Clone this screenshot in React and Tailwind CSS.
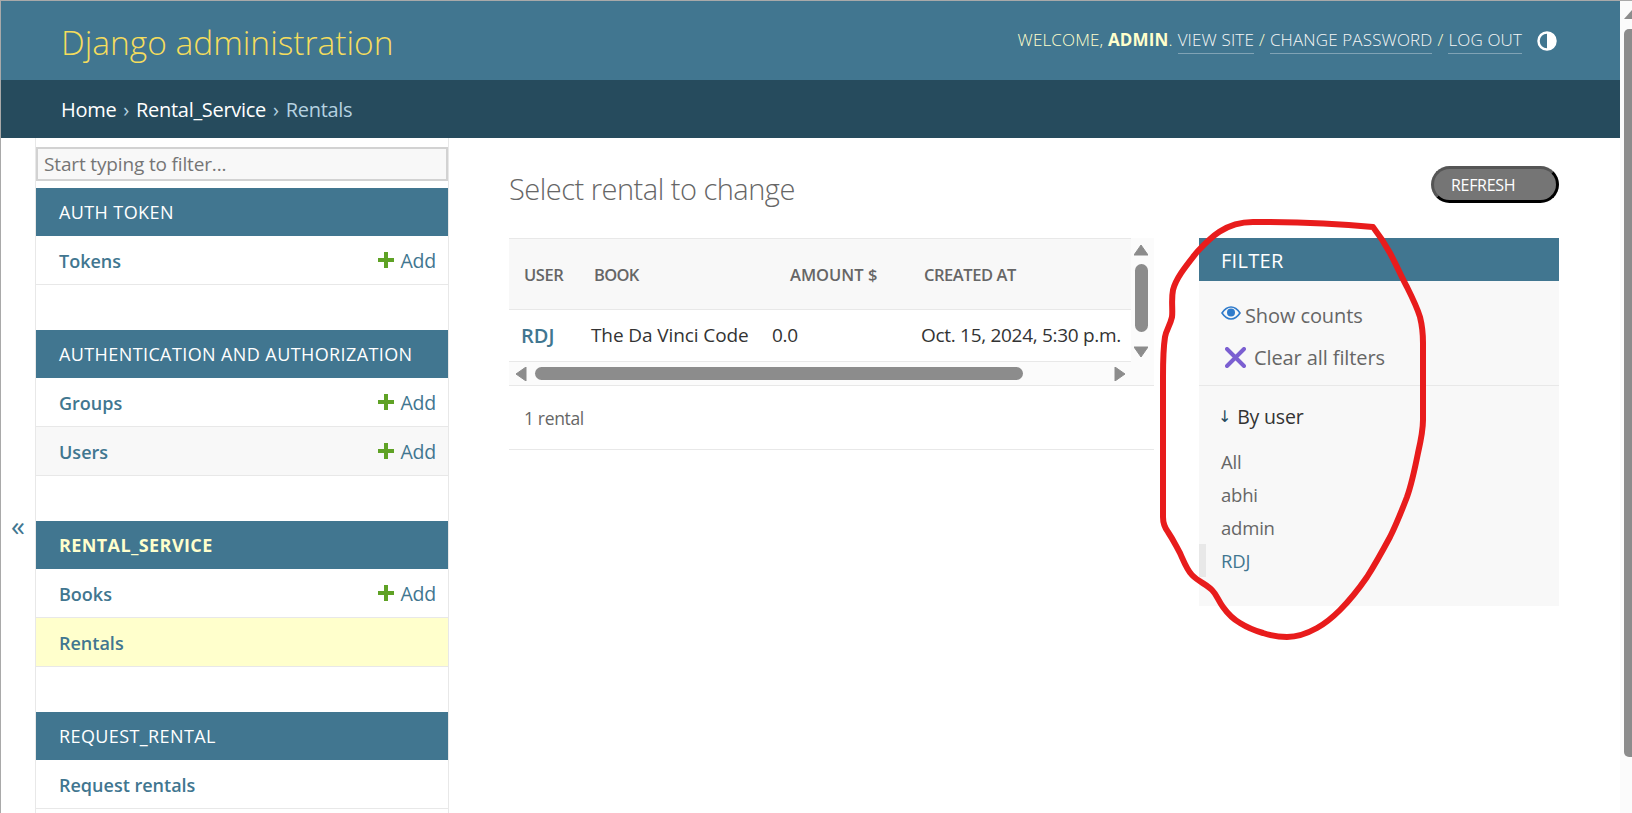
const FONT = "font-['Open_Sans','Noto_Sans',sans-serif]";

function Plus() {
  return (
    <svg width="16" height="16" viewBox="0 0 16 16" className="mr-[6px] -mt-[3px]">
      <path d="M6 0h4v6h6v4h-6v6H6v-6H0V6h6z" fill="#5fa225" />
    </svg>
  );
}

function Row({ name, add, active, alt }) {
  return (
    <div
      className={`h-[49px] flex items-center justify-between pl-[23px] pr-[12px] pt-[2px] border-b border-[#e8e8e8] ${
        active ? "bg-[#ffffcc]" : alt ? "bg-[#f8f8f8]" : "bg-white"
      }`}
    >
      <span className="text-[#417690] text-[18px] font-semibold tracking-[0px]">{name}</span>
      {add && (
        <span className="flex items-center text-[#417690] text-[19.5px] tracking-[-0.2px]">
          <Plus />
          Add
        </span>
      )}
    </div>
  );
}

function Group({ title, current, rows }) {
  return (
    <div className="mb-[45px]">
      <div
        className={`h-[48px] bg-[#417690] flex items-center pl-[23px] pt-[1px] text-[18px] tracking-[0.4px] ${
          current ? "text-[#ffffcc] font-bold" : "text-white"
        }`}
      >
        {title}
      </div>
      {rows.map((r) => (
        <Row key={r.name} {...r} />
      ))}
    </div>
  );
}

function TopLink({ children }) {
  return <span className="border-b border-[#ffffff55] text-[#f6f6f6]">{children}</span>;
}

function Arrow({ dir, size = 14 }) {
  const pts = {
    up: "7,2 14,12 0,12",
    down: "0,2 14,2 7,12",
    left: "12,0 12,14 2,7",
    right: "2,0 12,7 2,14",
  }[dir];
  return (
    <svg width={size} height={size} viewBox="0 0 14 14" className="shrink-0">
      <polygon points={pts} fill="#8c8c8c" stroke="#8c8c8c" strokeWidth="1" strokeLinejoin="round" />
    </svg>
  );
}

function FilterChoice({ children, selected }) {
  return (
    <div
      className={`h-[33px] flex items-center text-[18.5px] tracking-[-0.2px] ${
        selected ? "text-[#417690] border-l-[7px] border-[#e8e8e8] pl-[15px]" : "text-[#666666] pl-[22px]"
      }`}
    >
      {children}
    </div>
  );
}

export default function App() {
  return (
    <div className={`relative h-[813px] w-full overflow-hidden flex bg-white border-l border-t border-[#a9a9a9] ${FONT}`}>
      <div className="w-[1619px] shrink-0 flex flex-col">
        <header className="h-[79px] bg-[#417690] flex items-center justify-between pl-[60px] pr-[63px] shrink-0">
          <h1 className="text-[#f5dd5d] text-[33.5px] font-light mt-[4px]">Django administration</h1>
          <div className="flex items-center">
            <div className="text-[#ffffcc] text-[17px] font-light uppercase tracking-[0.15px] flex gap-[5px]">
              <span>
                Welcome, <strong className="font-bold">admin</strong>.
              </span>
              <TopLink>View site</TopLink>
              <span>/</span>
              <TopLink>Change password</TopLink>
              <span>/</span>
              <TopLink>Log out</TopLink>
            </div>
            <svg width="20" height="20" viewBox="0 0 20 20" className="ml-[15px]">
              <circle cx="10" cy="10" r="8.5" fill="none" stroke="#fff" strokeWidth="2.5" />
              <path d="M10 1a9 9 0 0 1 0 18z" fill="#fff" />
            </svg>
          </div>
        </header>
        <div className="h-[58px] bg-[#264b5d] flex items-center pl-[60px] pt-[2px] text-[20px] tracking-[-0.3px] shrink-0 gap-[7px]">
          <span className="text-white">Home</span>
          <span className="text-[#b5d2e0]">›</span>
          <span className="text-white">Rental_Service</span>
          <span className="text-[#b5d2e0]">›</span>
          <span className="text-[#b5d2e0]">Rentals</span>
        </div>
        <div className="flex flex-1 min-h-0">
          <div className="w-[34px] shrink-0 pt-[372px] flex justify-center">
            <span className="text-[#417690] text-[28px] leading-[30px]">«</span>
          </div>
          <nav className="w-[414px] shrink-0 border-x border-[#e8e8e8] overflow-hidden pt-[9px]">
            <div className="h-[34px] mb-[7px] border-2 border-[#d2d2d2] bg-[#f8f8f8] text-[#757575] text-[19px] tracking-[-0.15px] pl-[6px] pt-[1px] flex items-center">
              Start typing to filter...
            </div>
            <Group title="AUTH TOKEN" rows={[{ name: "Tokens", add: true }]} />
            <Group
              title="AUTHENTICATION AND AUTHORIZATION"
              rows={[
                { name: "Groups", add: true },
                { name: "Users", add: true, alt: true },
              ]}
            />
            <Group
              title="RENTAL_SERVICE"
              current
              rows={[
                { name: "Books", add: true },
                { name: "Rentals", active: true },
              ]}
            />
            <Group title="REQUEST_RENTAL" rows={[{ name: "Request rentals" }]} />
          </nav>
          <main className="flex-1 min-w-0 pl-[60px] pr-[61px]">
            <div className="h-[100px] flex justify-between items-start">
              <h2 className="text-[#666666] text-[29px] font-light tracking-[-0.5px] mt-[31px] leading-[40px]">
                Select rental to change
              </h2>
              <div className="mt-[28px] w-[128px] h-[37px] rounded-full bg-[#757575] border-[3px] border-t-[#555555] border-l-[#555555] border-r-black border-b-black text-white text-[16px] tracking-[-0.3px] flex items-center pl-[17px]">
                REFRESH
              </div>
            </div>
            <div className="flex justify-between">
              <section className="w-[645px]">
                <div className="flex">
                  <div className="w-[622px]">
                    <div className="h-[72px] bg-[#f8f8f8] border-y border-[#e8e8e8] flex items-center pt-[3px] text-[#666666] text-[16.5px] font-semibold tracking-[-0.45px]">
                      <span className="w-[85px] pl-[15px]">USER</span>
                      <span className="w-[196px] tracking-[-0.7px]">BOOK</span>
                      <span className="w-[134px] whitespace-nowrap tracking-[0px]">AMOUNT $</span>
                      <span>CREATED AT</span>
                    </div>
                    <div className="h-[52px] border-b border-[#e8e8e8] flex items-center text-[#333333] text-[19px] tracking-[-0.3px]">
                      <span className="w-[82px] pl-[12px] text-[#417690] text-[20px] font-semibold tracking-[0px]">RDJ</span>
                      <span className="w-[181px] whitespace-nowrap tracking-[-0.1px]">The Da Vinci Code</span>
                      <span className="w-[149px]">0.0</span>
                      <span className="whitespace-nowrap">Oct. 15, 2024, 5:30 p.m.</span>
                    </div>
                  </div>
                  <div className="w-[23px] h-[124px] bg-[#fbfbfb] flex flex-col items-center pt-[5px] pr-[3px]">
                    <Arrow dir="up" />
                    <div className="w-[13px] h-[68px] mt-[7px] rounded-full bg-[#8c8c8c]" />
                    <div className="mt-[13px]">
                      <Arrow dir="down" />
                    </div>
                  </div>
                </div>
                <div className="h-[24px] bg-[#fbfbfb] border-b border-[#e8e8e8] flex items-center pl-[5px]">
                  <Arrow dir="left" />
                  <div className="ml-[7px] w-[488px] h-[13px] rounded-full bg-[#8c8c8c]" />
                  <div className="ml-[90px]">
                    <Arrow dir="right" />
                  </div>
                </div>
                <div className="h-[64px] border-b border-[#e8e8e8] flex items-center pl-[15px] pt-[2px] text-[#666666] text-[17.5px] tracking-[-0.35px]">
                  1 rental
                </div>
              </section>
              <aside className="w-[360px] h-[368px] bg-[#f8f8f8]">
                <div className="h-[43px] bg-[#417690] text-white text-[20px] tracking-[0.3px] flex items-center pl-[22px] pt-[2px]">FILTER</div>
                <div className="h-[105px] border-b border-[#e8e8e8] pt-[14px]">
                  <div className="h-[41px] flex items-center pl-[22px] text-[#666666] text-[20px] tracking-[-0.1px]">
                    <svg width="20" height="14" viewBox="0 0 20 14" className="mr-[4px] -mt-[5px]">
                      <path d="M1 7C4 2.500 7 1 10 1s6 1.500 9 6c-3 4.500-6 6-9 6s-6-1.500-9-6z" fill="none" stroke="#2f7bcb" strokeWidth="1.6" />
                      <circle cx="10" cy="6.500" r="4" fill="#2f7bcb" />
                    </svg>
                    Show counts
                  </div>
                  <div className="h-[43px] flex items-center pl-[26px] text-[#666666] text-[20px] tracking-[-0.1px]">
                    <svg width="21" height="21" viewBox="0 0 21 21" className="mr-[8px]">
                      <path d="M2 2l17 17M19 2L2 19" stroke="#7b5fd1" strokeWidth="4" strokeLinecap="round" />
                    </svg>
                    Clear all filters
                  </div>
                </div>
                <div className="h-[59px] flex items-center pl-[19px] pt-[2px] text-[#333333] text-[19.5px] tracking-[-0.2px]">
                  <span className="text-[#264b5d] font-['DejaVu_Sans',sans-serif] text-[16px] mr-[6px]">↓</span>
                  By user
                </div>
                <div>
                  <FilterChoice>All</FilterChoice>
                  <FilterChoice>abhi</FilterChoice>
                  <FilterChoice>admin</FilterChoice>
                  <FilterChoice selected>RDJ</FilterChoice>
                </div>
              </aside>
            </div>
          </main>
        </div>
      </div>
      <div className="flex-1 bg-[#fbfbfb] flex flex-col items-end">
        <div className="w-[8px] flex justify-end mt-[9px]">
          <svg width="8" height="9" viewBox="0 0 8 9">
            <polygon points="8,0 8,9 0,9" fill="#8c8c8c" />
          </svg>
        </div>
        <div className="w-[8px] h-[728px] mt-[10px] bg-[#8c8c8c] rounded-l-[5px]" />
      </div>

      <svg className="absolute inset-0 pointer-events-none" width="1632" height="813" viewBox="0 0 1632 813">
        <path
          transform="translate(-1 -1)"
          d="M1373 227C1340 224 1290 222 1253 222C1225 222 1210 238 1197 252C1186 266 1176 278 1173 290C1171 300 1173 310 1172 317C1170 326 1166 330 1165 337C1163 350 1163 365 1163 377L1163 517C1163 524 1165 528 1168 532C1174 541 1176 546 1180 553C1184 562 1187 570 1192 575C1199 582 1206 584 1212 590C1217 595 1218 600 1223 607C1228 614 1233 619 1240 623C1248 628 1256 631 1263 633C1272 636 1280 637 1287 637C1298 637 1308 633 1317 628C1326 623 1332 618 1340 610C1350 600 1358 590 1367 577C1376 563 1383 550 1390 537C1397 523 1402 510 1407 497C1412 483 1415 468 1418 453C1421 440 1423 430 1423 420L1423 343C1423 332 1422 325 1420 317C1417 307 1412 297 1407 287C1401 276 1397 266 1390 253C1385 244 1380 236 1373 227Z"
          fill="none"
          stroke="#e81c1c"
          strokeWidth="6"
          strokeLinejoin="round"
        />
      </svg>
    </div>
  );
}
